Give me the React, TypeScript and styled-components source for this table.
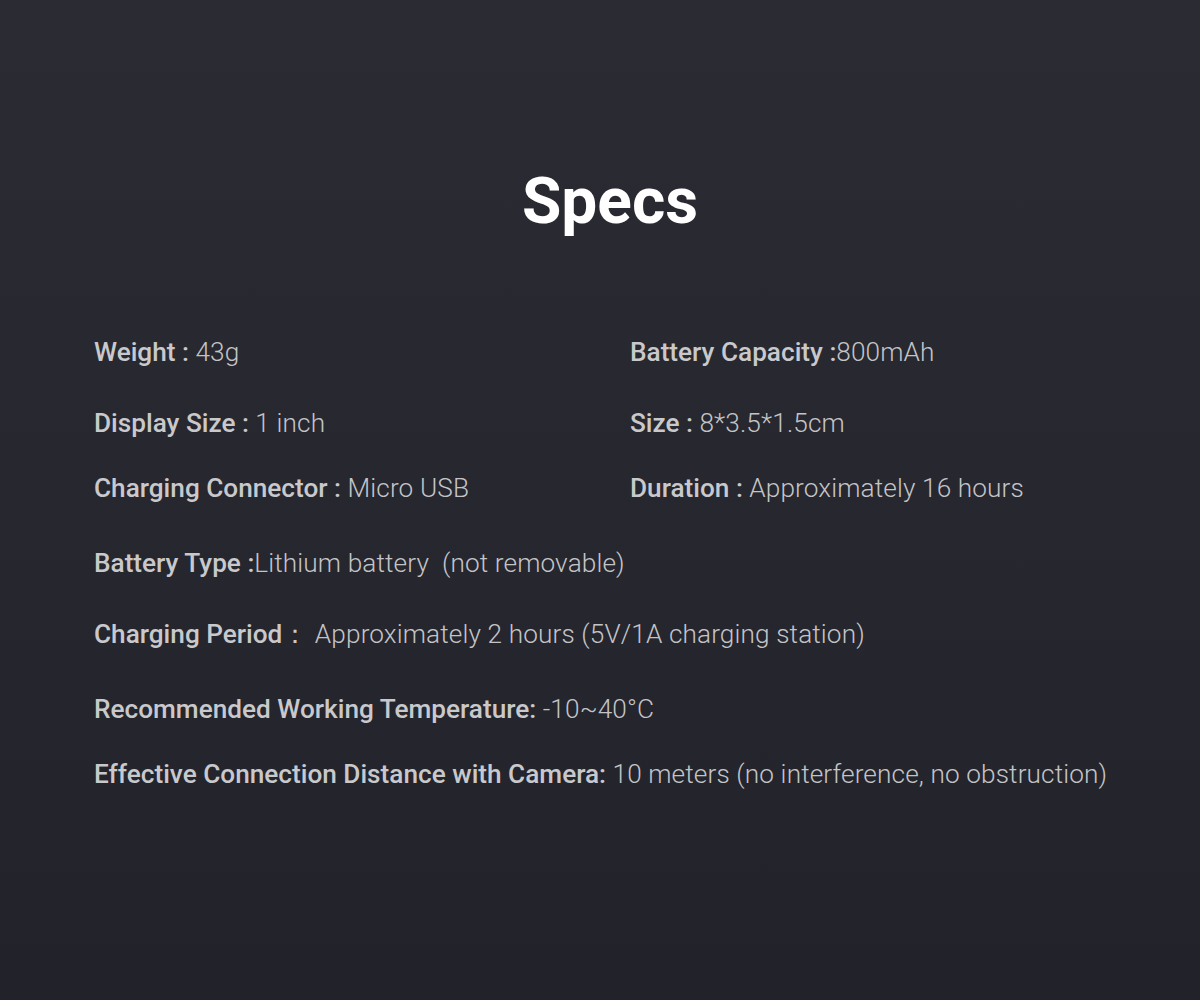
import styled, { createGlobalStyle } from 'styled-components'

const GlobalStyle = createGlobalStyle`
  html, body {
    margin: 0;
    padding: 0;
  }
  body {
    font-family: Roboto, "Liberation Sans", sans-serif;
  }
`

const Page = styled.main`
  box-sizing: border-box;
  width: 1200px;
  height: 1000px;
  padding: 170px 0 0 94px;
  background: linear-gradient(180deg, #2b2b33 0%, #25262e 60%, #22232a 100%);
  color: #c6c6c9;
  overflow: hidden;
`

const Title = styled.h1`
  margin: 0 0 0 -94px;
  padding-left: 20px;
  font-size: 64px;
  line-height: 1;
  font-weight: 700;
  color: #ffffff;
  text-align: center;
`

const Specs = styled.div`
  margin-top: 103px;
  display: flex;
  flex-direction: column;
`

const Row = styled.div<{ $gap: number }>`
  display: grid;
  grid-template-columns: 536px auto;
  margin-top: ${props => props.$gap}px;
  &:first-child {
    margin-top: 0;
  }
`

const Item = styled.div`
  font-size: 26.2px;
  line-height: 30px;
  white-space: pre;
`

const Label = styled.span`
  font-weight: 500;
  color: #c9c9cc;
`

const Value = styled.span`
  font-weight: 300;
  letter-spacing: 0.12px;
  color: #c4c4c7;
`

type Spec = { label: string; value: string }

const rows: { gap: number; items: Spec[] }[] = [
  {
    gap: 0,
    items: [
      { label: 'Weight : ', value: '43g' },
      { label: 'Battery Capacity :', value: '800mAh' },
    ],
  },
  {
    gap: 41,
    items: [
      { label: 'Display Size : ', value: '1 inch' },
      { label: 'Size : ', value: '8*3.5*1.5cm' },
    ],
  },
  {
    gap: 35,
    items: [
      { label: 'Charging Connector : ', value: 'Micro USB' },
      { label: 'Duration : ', value: 'Approximately 16 hours' },
    ],
  },
  {
    gap: 45,
    items: [{ label: 'Battery Type :', value: 'Lithium battery  (not removable)' }],
  },
  {
    gap: 41,
    items: [{ label: 'Charging Period\uFF1A ', value: 'Approximately 2 hours (5V/1A charging station)' }],
  },
  {
    gap: 45,
    items: [{ label: 'Recommended Working Temperature: ', value: '-10~40°C' }],
  },
  {
    gap: 35,
    items: [
      {
        label: 'Effective Connection Distance with Camera: ',
        value: '10 meters (no interference, no obstruction)',
      },
    ],
  },
]

export default function App() {
  return (
    <>
      <GlobalStyle />
      <Page>
        <Title>Specs</Title>
        <Specs>
          {rows.map((row, i) => (
            <Row key={i} $gap={row.gap}>
              {row.items.map(item => (
                <Item key={item.label}>
                  <Label>{item.label}</Label>
                  <Value>{item.value}</Value>
                </Item>
              ))}
            </Row>
          ))}
        </Specs>
      </Page>
    </>
  )
}
